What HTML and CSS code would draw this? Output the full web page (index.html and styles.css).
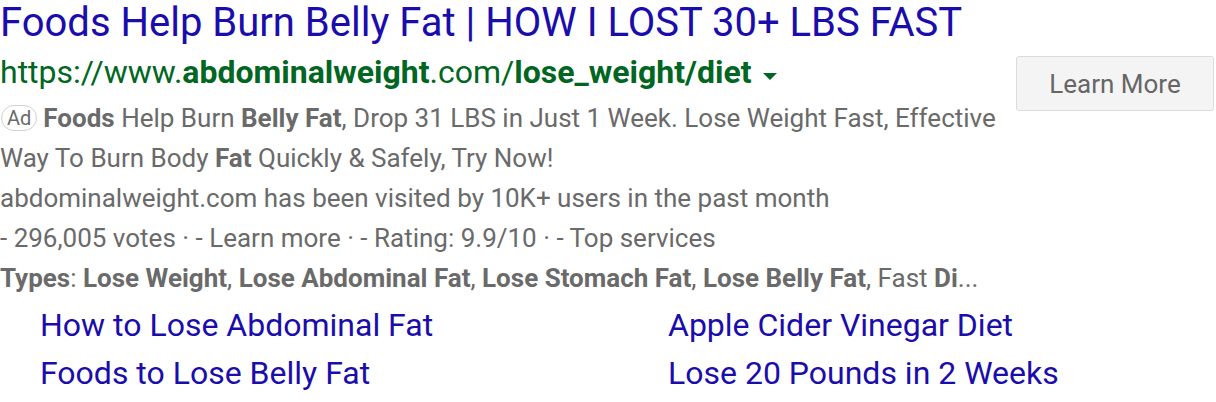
FILE: index.html
```html
<!DOCTYPE html>
<html lang="en">
<head>
<meta charset="utf-8">
<title>Ad</title>
<link rel="stylesheet" href="styles.css">
</head>
<body>
<div class="ad">
  <div class="top">
    <div class="main">
      <a class="title" href="#">Foods Help Burn Belly Fat | HOW I LOST 30+ LBS FAST</a>
      <div class="url">https://www.<b>abdominalweight</b>.com/<b>lose_weight/diet</b><span class="caret"></span></div>
      <div class="desc">
        <p><span class="badge">Ad</span><b>Foods</b> Help Burn <b>Belly Fat</b>, Drop 31 LBS in Just 1 Week. Lose Weight Fast, Effective Way To Burn Body <b>Fat</b> Quickly &amp; Safely, Try Now!</p>
        <p>abdominalweight.com has been visited by 10K+ users in the past month</p>
        <p>- 296,005 votes · - Learn more · - Rating: 9.9/10 · - Top services</p>
        <p><b>Types</b>: <b>Lose Weight</b>, <b>Lose Abdominal Fat</b>, <b>Lose Stomach Fat</b>, <b>Lose Belly Fat</b>, Fast <b>Di</b>...</p>
      </div>
    </div>
    <div class="side">
      <button class="btn" type="button">Learn More</button>
    </div>
  </div>
  <div class="links">
    <a href="#">How to Lose Abdominal Fat</a>
    <a href="#">Apple Cider Vinegar Diet</a>
    <a href="#">Foods to Lose Belly Fat</a>
    <a href="#">Lose 20 Pounds in 2 Weeks</a>
  </div>
</div>
</body>
</html>
```

FILE: styles.css
```css
html, body {
  margin: 0;
  padding: 0;
  background: #fff;
}
body {
  font-family: Roboto, "Liberation Sans", Arial, sans-serif;
}
.ad {
  padding: 0 2px 0 0;
}
.top {
  display: flex;
  align-items: flex-start;
}
.main {
  flex: 1;
  min-width: 0;
}
.title {
  display: block;
  color: #1a0dab;
  font-size: 40px;
  line-height: 46px;
  text-decoration: none;
  white-space: nowrap;
}
.url {
  color: #006621;
  font-size: 32px;
  line-height: 52px;
  white-space: nowrap;
}
.url b {
  font-weight: 700;
}
.caret {
  display: inline-block;
  width: 0;
  height: 0;
  margin-left: 12px;
  vertical-align: 3px;
  border-left: 7px solid transparent;
  border-right: 7px solid transparent;
  border-top: 7px solid #006621;
}
.desc {
  color: #6a6a6a;
  font-size: 26px;
  line-height: 40px;
  max-width: 1000px;
}
.desc p {
  margin: 0;
}
.desc b {
  font-weight: 700;
}
.badge {
  display: inline-block;
  font-size: 20px;
  line-height: 24px;
  padding: 0 5px;
  border: 1px solid #d0d0d0;
  border-radius: 13px;
  margin: 0 6px 0 1px;
  color: #6a6a6a;
  vertical-align: 2px;
}
.side {
  padding-top: 56px;
}
.btn {
  width: 198px;
  height: 55px;
  background: #f4f4f4;
  border: 1px solid #dcdcdc;
  border-radius: 3px;
  color: #666;
  font-family: Roboto, "Liberation Sans", Arial, sans-serif;
  font-size: 26px;
  padding: 0;
}
.links {
  display: grid;
  grid-template-columns: 628px 1fr;
  padding-left: 40px;
  padding-top: 3px;
}
.links a {
  color: #1a0dab;
  font-size: 32px;
  line-height: 48px;
  text-decoration: none;
}
```
